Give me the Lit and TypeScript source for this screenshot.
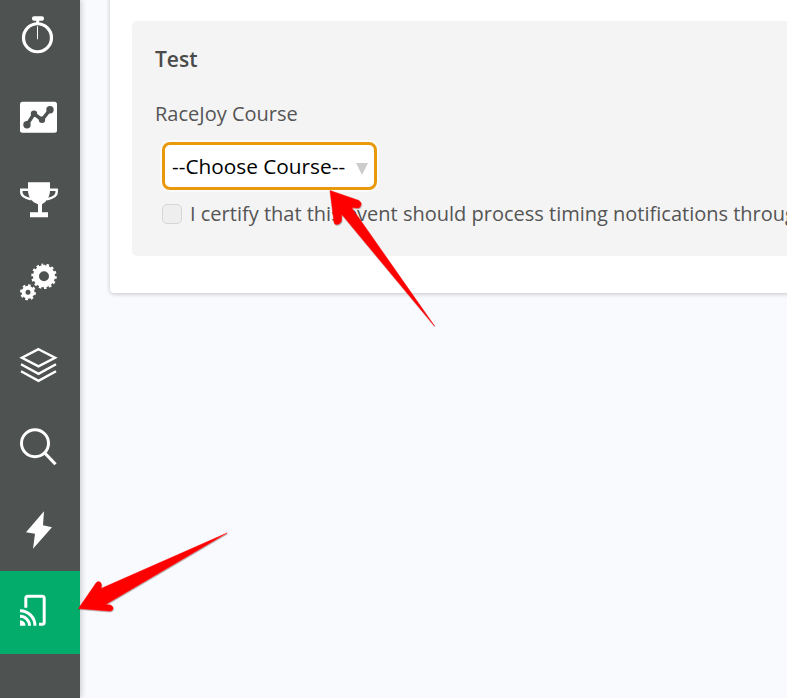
import { LitElement, html, css, svg } from 'lit';
import { customElement } from 'lit/decorators.js';

// icon coordinates are page coordinates, each svg's viewBox is its 40px window on the rail
const icons = [
  svg`<circle cx="37.5" cy="37.5" r="14" fill="none" stroke="#fff" stroke-width="3.2"/>
    <rect x="32" y="16" width="12" height="4.5" rx="2" fill="#fff"/>
    <rect x="36.2" y="19" width="3" height="4" fill="#fff"/>
    <rect x="37" y="26" width="1" height="13" fill="#fff"/>`,
  svg`<rect x="20" y="102" width="37" height="31" rx="2.5" fill="#fff"/>
    <polyline points="27,125 34,114 42,120 50,110" fill="none" stroke="#4e5251" stroke-width="3.5"/>
    <g fill="#4e5251"><circle cx="27" cy="125" r="3.7"/><circle cx="34" cy="114" r="3.2"/><circle cx="42" cy="120" r="3.2"/><circle cx="50" cy="110" r="3.7"/></g>`,
  svg`<path d="M28 182H50V190C50 197 46 202 42 204V212H48V217H30V212H38V204C32 202 28 197 28 190Z" fill="#fff"/>
    <path d="M28 189.5H21.3V192C21.3 195 24 197.5 31 199M50 189.5H56.7V192C56.7 195 54 197.5 47 199" fill="none" stroke="#fff" stroke-width="2.5"/>`,
  svg`<circle cx="44" cy="276.5" r="8" fill="none" stroke="#fff" stroke-width="6"/>
    <circle cx="44" cy="276.5" r="11.5" fill="none" stroke="#fff" stroke-width="2.5" pathLength="28" stroke-dasharray="1 1"/>
    <circle cx="28" cy="292.5" r="4.5" fill="none" stroke="#fff" stroke-width="4"/>
    <circle cx="28" cy="292.5" r="7" fill="none" stroke="#fff" stroke-width="2" pathLength="16" stroke-dasharray="1 1"/>`,
  svg`<g fill="none" stroke="#fff" stroke-width="2.5">
      <path d="M38.5 349L55 357.5L38.5 366L22 357.5Z"/>
      <path d="M21 364L38.5 373.5L56 364"/>
      <path d="M21 371L38.5 380.5L56 371"/>
    </g>`,
  svg`<circle cx="35" cy="443.5" r="13.5" fill="none" stroke="#fff" stroke-width="3"/>
    <path d="M45 453.5L55.5 464.5" fill="none" stroke="#fff" stroke-width="3.2"/>`,
  svg`<path d="M44 511L26 532L35 533.5L33 548.5L52 527L43 525Z" fill="#fff"/>`,
  svg`<path d="M25.8 608V598.5A2 2 0 0 1 27.8 596.5H42.2A2 2 0 0 1 44.2 598.5V622.5A2 2 0 0 1 42.2 624.5H39" fill="none" stroke="#fff" stroke-width="3"/>
    <path d="M20 620.5A5.5 5.5 0 0 1 25.5 626H20Z" fill="#fff"/>
    <path d="M20 616.5A9.5 9.5 0 0 1 29.5 626M20 611A15 15 0 0 1 35 626" fill="none" stroke="#fff" stroke-width="3"/>`,
];

@customElement('app-root')
export class AppRoot extends LitElement {
  static styles = css`
    :host {
      display: block;
      position: relative;
      width: 787px;
      height: 698px;
      overflow: hidden;
      background: #f9fafd;
      font-family: 'Open Sans', 'Noto Sans', sans-serif;
      color: #555;
    }

    .layout {
      display: flex;
      height: 100%;
    }

    .rail {
      flex: none;
      width: 80px;
      background: #4e5251;
      box-shadow: 2px 0 5px rgba(0, 0, 0, 0.16);
      z-index: 1;
    }

    .rail-list {
      margin-top: -6.5px;
    }

    .rail-item {
      display: flex;
      align-items: center;
      justify-content: center;
      height: 82.5px;
    }

    .rail-item.active {
      background: #03ac6b;
    }

    .rail-item svg {
      width: 40px;
      height: 40px;
      overflow: visible;
    }

    .main {
      flex: 1;
      min-width: 0;
      padding-left: 30px;
      overflow: hidden;
    }

    .card {
      width: 760px;
      margin-top: -10px;
      padding: 31px 22px 37px;
      background: #fff;
      border-radius: 4px;
      box-shadow: 0 1px 4px rgba(0, 0, 0, 0.22);
    }

    .panel {
      height: 235px;
      box-sizing: border-box;
      padding: 23px 23px 0;
      background: #f4f4f4;
      border-radius: 5px;
      white-space: nowrap;
    }

    h3 {
      margin: 0;
      font-size: 21px;
      line-height: 30px;
      font-weight: 600;
      color: #4a4a4a;
    }

    .label {
      margin-top: 27px;
      font-size: 20px;
      line-height: 26px;
    }

    .select-wrap {
      position: relative;
      width: 215px;
      margin: 15px 0 0 7px;
    }

    .select-wrap::after {
      content: '';
      position: absolute;
      left: 194px;
      top: 21px;
      border: 6px solid transparent;
      border-top: 12px solid #ccc;
      border-bottom: 0;
    }

    select {
      display: block;
      appearance: none;
      width: 215px;
      height: 48px;
      padding: 0 0 0 7px;
      border: 3px solid #e89a0c;
      border-radius: 8px;
      background: #fff;
      box-shadow: 0 0 0 2px #fafafa;
      color: #000;
      font: inherit;
      font-size: 20.8px;
    }

    .certify {
      display: flex;
      align-items: center;
      gap: 8px;
      margin: 11px 0 0 7px;
      font-size: 20px;
      line-height: 26px;
    }

    input {
      appearance: none;
      flex: none;
      width: 20px;
      height: 20px;
      margin: 0;
      background: #eee;
      border: 1px solid #d6d6d6;
      border-radius: 5px;
    }

    .arrows {
      position: absolute;
      inset: 0;
      width: 787px;
      height: 698px;
      z-index: 2;
      pointer-events: none;
    }
  `;

  render() {
    return html`
      <div class="layout">
        <nav class="rail">
          <div class="rail-list">
            ${icons.map((icon, i) => {
              const cy = -6.5 + 82.5 * i + 41.25;
              return html`
                <div class="rail-item ${i === 7 ? 'active' : ''}">
                  <svg viewBox="20 ${cy - 20} 40 40">${icon}</svg>
                </div>
              `;
            })}
          </div>
        </nav>
        <main class="main">
          <section class="card">
            <div class="panel">
              <h3>Test</h3>
              <div class="label">RaceJoy Course</div>
              <div class="select-wrap">
                <select><option>--Choose Course--</option></select>
              </div>
              <label class="certify">
                <input type="checkbox" disabled />
                <span>I certify that this event should process timing notifications through</span>
              </label>
            </div>
          </section>
        </main>
      </div>
      <svg class="arrows" viewBox="0 0 787 698">
        <defs>
          <filter id="s" x="-10%" y="-10%" width="120%" height="120%">
            <feDropShadow dx="0.5" dy="1" stdDeviation="0.7" flood-color="#000" flood-opacity="0.35"/>
          </filter>
        </defs>
        <g fill="#f00" stroke="#f00" stroke-width="0.5" stroke-linejoin="round" filter="url(#s)">
          <path d="M330 190.5L359 200.5Q362.5 203 360.5 206Q360 208 357.5 208L351.5 207.5L434.5 326L341.5 214L341.5 221Q340 224.5 336 224.5Q334.5 224 334 222Z"/>
          <path d="M78.5 608.5L96 583Q98.5 580.5 100.5 582.5Q102 584 101 588.5L227 533L105.500 604.500L110.500 605Q113.500 606.500 113 609Q112 611.500 109 611Z"/>
        </g>
      </svg>
    `;
  }
}
